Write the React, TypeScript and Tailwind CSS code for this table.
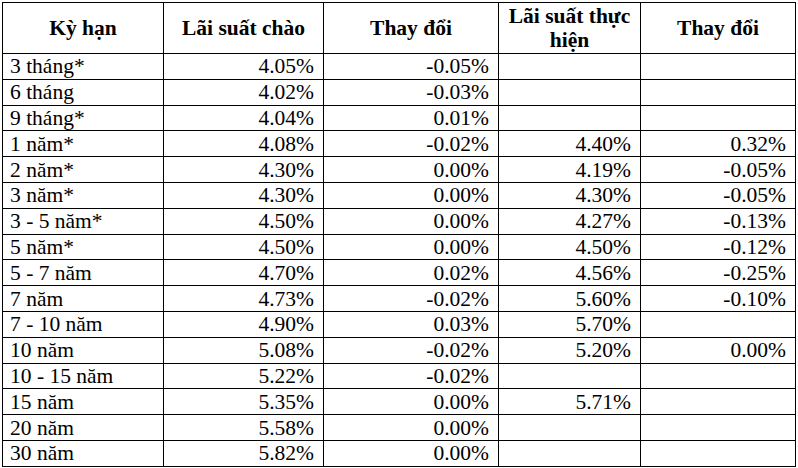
const rows: [string, string, string, string, string][] = [
  ["3 tháng*", "4.05%", "-0.05%", "", ""],
  ["6 tháng", "4.02%", "-0.03%", "", ""],
  ["9 tháng*", "4.04%", "0.01%", "", ""],
  ["1 năm*", "4.08%", "-0.02%", "4.40%", "0.32%"],
  ["2 năm*", "4.30%", "0.00%", "4.19%", "-0.05%"],
  ["3 năm*", "4.30%", "0.00%", "4.30%", "-0.05%"],
  ["3 - 5 năm*", "4.50%", "0.00%", "4.27%", "-0.13%"],
  ["5 năm*", "4.50%", "0.00%", "4.50%", "-0.12%"],
  ["5 - 7 năm", "4.70%", "0.02%", "4.56%", "-0.25%"],
  ["7 năm", "4.73%", "-0.02%", "5.60%", "-0.10%"],
  ["7 - 10 năm", "4.90%", "0.03%", "5.70%", ""],
  ["10 năm", "5.08%", "-0.02%", "5.20%", "0.00%"],
  ["10 - 15 năm", "5.22%", "-0.02%", "", ""],
  ["15 năm", "5.35%", "0.00%", "5.71%", ""],
  ["20 năm", "5.58%", "0.00%", "", ""],
  ["30 năm", "5.82%", "0.00%", "", ""],
];

const App = () => {
  return (
    <div className="bg-white w-[798px] h-[468px] pl-[2px] pt-[2px] text-black font-['Liberation_Serif','Times_New_Roman',serif]">
      <table className="table-fixed border-collapse border border-black text-[21.5px] leading-[22px]">
        <colgroup>
          <col className="w-[161px]" />
          <col className="w-[160px]" />
          <col className="w-[175px]" />
          <col className="w-[142px]" />
          <col className="w-[155px]" />
        </colgroup>
        <thead>
          <tr className="h-[51px]">
            <th className="border border-black font-bold text-center px-1">Kỳ hạn</th>
            <th className="border border-black font-bold text-center px-1">Lãi suất chào</th>
            <th className="border border-black font-bold text-center px-1">Thay đổi</th>
            <th className="border border-black font-bold text-center px-1 leading-[24px]">
              Lãi suất thực hiện
            </th>
            <th className="border border-black font-bold text-center px-1">Thay đổi</th>
          </tr>
        </thead>
        <tbody>
          {rows.map((r) => (
            <tr className="h-[25.8px]" key={r[0]}>
              <td className="border border-black pl-[7px] p-0">{r[0]}</td>
              <td className="border border-black text-right pr-[9px] p-0">{r[1]}</td>
              <td className="border border-black text-right pr-[9px] p-0">{r[2]}</td>
              <td className="border border-black text-right pr-[9px] p-0">{r[3]}</td>
              <td className="border border-black text-right pr-[9px] p-0">{r[4]}</td>
            </tr>
          ))}
        </tbody>
      </table>
    </div>
  );
};

export default App;
